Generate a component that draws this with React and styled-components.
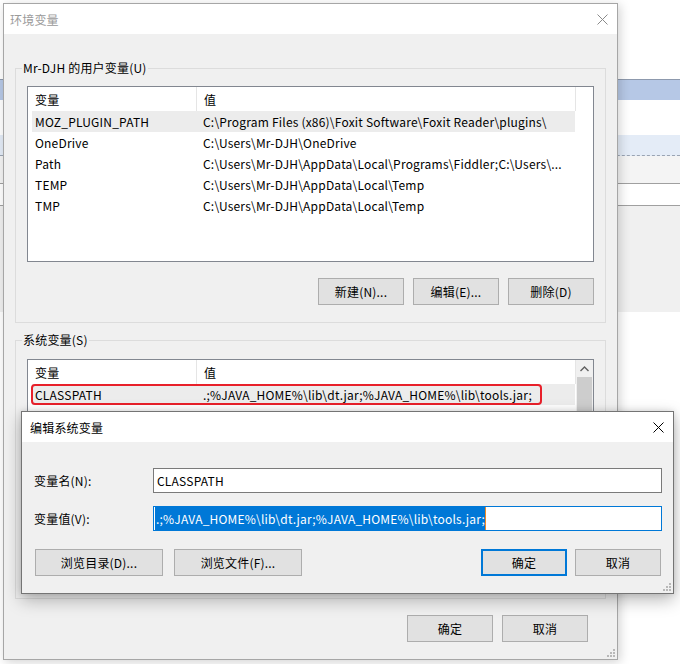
import React from "react";
import styled, { createGlobalStyle } from "styled-components";

const GlobalStyle = createGlobalStyle`
  html, body { margin: 0; padding: 0; }
  body {
    font-family: "Noto Sans CJK SC", "Noto Sans", sans-serif;
    font-size: 12px;
    letter-spacing: 0.2px;
    color: #000;
  }
`;

const Desktop = styled.div`
  position: relative;
  width: 680px;
  height: 664px;
  overflow: hidden;
  background: #fff;
`;

const BackApp = styled.div`
  display: flex;
  flex-direction: column;
  height: 100%;
`;

const Band = styled.div`
  flex: ${p => (p.$fill ? "1" : "none")};
  height: ${p => (p.$h ? p.$h + "px" : "auto")};
  background: ${p => p.$bg};
  border-bottom: ${p => p.$line || "none"};
`;

const Window = styled.div`
  position: absolute;
  left: ${p => p.$x}px;
  top: ${p => p.$y}px;
  width: ${p => p.$w}px;
  height: ${p => p.$h}px;
  box-sizing: border-box;
  display: flex;
  flex-direction: column;
  background: #f0f0f0;
  border: 1px solid ${p => (p.$active ? "#747474" : "#a6a6a6")};
  box-shadow: ${p =>
    p.$active
      ? "0 6px 16px rgba(0,0,0,0.28), 0 0 6px rgba(0,0,0,0.12)"
      : "2px 2px 10px rgba(0,0,0,0.18)"};
`;

const TitleBar = styled.div`
  height: 30px;
  flex: none;
  background: #fff;
  display: flex;
  align-items: center;
  justify-content: space-between;
  padding-left: ${p => p.$pad}px;
  color: ${p => (p.$active ? "#000" : "#9a9a9a")};
`;

const CloseBtn = styled.div`
  width: 30px;
  height: 30px;
  display: flex;
  align-items: center;
  justify-content: center;
`;

const MainBody = styled.div`
  flex: 1;
  position: relative;
  display: flex;
  flex-direction: column;
  padding: 26px 11px 0 11px;
`;

const Group = styled.fieldset`
  margin: ${p => p.$mt}px 0 0 0;
  padding: ${p => p.$pt}px 11px ${p => p.$pb}px 11px;
  border: 1px solid #dcdcdc;
  min-width: 0;
  display: flex;
  flex-direction: column;
  legend {
    margin-left: -5px;
    padding: 0 1px;
    line-height: 16px;
    color: #000;
  }
`;

const ListBox = styled.div`
  height: ${p => p.$h}px;
  box-sizing: border-box;
  border: 1px solid #828790;
  background: #fff;
  display: flex;
  overflow: hidden;
`;

const ListMain = styled.div`
  flex: 1;
  min-width: 0;
`;

const HeaderRow = styled.div`
  display: grid;
  grid-template-columns: 169px 379px;
  height: 24px;
  align-items: stretch;
  div {
    display: flex;
    align-items: center;
    padding-left: 7px;
    border-right: 1px solid #e5e5e5;
  }
`;

const Row = styled.div`
  position: relative;
  display: grid;
  grid-template-columns: 164px 379px;
  width: 543px;
  margin-left: 4px;
  height: 21px;
  background: ${p => (p.$hot ? "#ececec" : "transparent")};
  div {
    display: flex;
    align-items: center;
    white-space: nowrap;
    overflow: hidden;
  }
  div:first-of-type { padding-left: 3px; }
  div:last-of-type { padding-left: 7px; }
`;

const Mark = styled.span`
  position: absolute;
  left: -1px;
  top: 0;
  width: 511px;
  height: 21px;
  box-sizing: border-box;
  border: 2px solid #e8202a;
  border-radius: 4px;
`;

const ScrollBar = styled.div`
  width: 17px;
  flex: none;
  background: #f0f0f0;
  display: flex;
  flex-direction: column;
  align-items: center;
`;

const ScrollArrow = styled.div`
  height: 17px;
  display: flex;
  align-items: center;
  justify-content: center;
`;

const Thumb = styled.div`
  width: 15px;
  flex: 1;
  background: #cdcdcd;
`;

const ButtonRow = styled.div`
  display: flex;
  justify-content: ${p => p.$justify || "flex-end"};
  gap: ${p => p.$gap || 10}px;
  margin-top: ${p => p.$mt}px;
  padding-right: ${p => p.$pr || 0}px;
  padding-left: ${p => p.$pl || 0}px;
`;

const HiddenRow = styled.div`
  height: 27px;
  margin-top: 16px;
`;

const Button = styled.div`
  width: ${p => p.$w || 86}px;
  height: 27px;
  box-sizing: border-box;
  background: #e1e1e1;
  border: ${p => (p.$default ? "2px solid #0078d7" : "1px solid #adadad")};
  display: flex;
  align-items: center;
  justify-content: center;
`;

const ButtonGroup = styled.div`
  display: flex;
  gap: ${p => p.$gap}px;
`;

const Grip = styled.svg`
  position: absolute;
  right: 1px;
  bottom: 1px;
`;

const EditBody = styled.div`
  flex: 1;
  position: relative;
  display: flex;
  flex-direction: column;
  padding: 25px 11px 0 12px;
`;

const Field = styled.div`
  display: flex;
  align-items: center;
  margin-top: ${p => p.$mt}px;
`;

const Label = styled.div`
  width: 119px;
  flex: none;
`;

const Input = styled.div`
  flex: 1;
  height: 25px;
  box-sizing: border-box;
  background: #fff;
  border: 1px solid ${p => (p.$focus ? "#0078d7" : "#7a7a7a")};
  display: flex;
  align-items: center;
  padding: 0 1px 0 ${p => (p.$focus ? 1 : 3)}px;
  white-space: nowrap;
`;

const Selection = styled.span`
  height: 100%;
  display: inline-flex;
  align-items: center;
  padding: 0 0 0 1px;
  background: #0078d7;
  color: #fff;
`;

const Caret = styled.span`
  width: 1px;
  height: 100%;
  background: #f08a24;
`;

const Close = ({ color }) => (
  <svg width="11" height="11" viewBox="0 0 11 11">
    <path d="M0.5 0.5 L10.5 10.5 M10.5 0.5 L0.5 10.5" stroke={color} strokeWidth="1" fill="none" />
  </svg>
);

const GripIcon = () => (
  <Grip width="11" height="11" viewBox="0 0 11 11">
    {[
      [8, 2], [8, 5], [5, 5], [8, 8], [5, 8], [2, 8],
    ].map(([x, y]) => (
      <rect key={x + "-" + y} x={x} y={y} width="2" height="2" fill="#b8b8b8" />
    ))}
  </Grip>
);

const userVars = [
  ["MOZ_PLUGIN_PATH", "C:\\Program Files (x86)\\Foxit Software\\Foxit Reader\\plugins\\"],
  ["OneDrive", "C:\\Users\\Mr-DJH\\OneDrive"],
  ["Path", "C:\\Users\\Mr-DJH\\AppData\\Local\\Programs\\Fiddler;C:\\Users\\..."],
  ["TEMP", "C:\\Users\\Mr-DJH\\AppData\\Local\\Temp"],
  ["TMP", "C:\\Users\\Mr-DJH\\AppData\\Local\\Temp"],
];

const classpath = ".;%JAVA_HOME%\\lib\\dt.jar;%JAVA_HOME%\\lib\\tools.jar;";

export default function App() {
  return (
    <Desktop>
      <GlobalStyle />
      <BackApp>
        <Band $h={79} $bg="#ffffff" $line="1px solid #8d99ad" />
        <Band $h={20} $bg="#b6c8e6" $line="1px solid #ffffff" />
        <Band $h={34} $bg="#ffffff" />
        <Band $h={20} $bg="#e4ecf7" $line="1px dashed #9aa4b3" />
        <Band $h={27} $bg="#f4f4f4" $line="1px solid #a0a0a0" />
        <Band $h={21} $bg="#ffffff" $line="1px solid #a0a0a0" />
        <Band $h={106} $bg="#f0f0f0" />
        <Band $fill $bg="#ffffff" />
      </BackApp>

      <Window $x={3} $y={3} $w={615} $h={657}>
        <TitleBar $pad={6}>
          <span>环境变量</span>
          <CloseBtn>
            <Close color="#8a8a8a" />
          </CloseBtn>
        </TitleBar>
        <MainBody>
          <Group $mt={0} $pt={10} $pb={17}>
            <legend>Mr-DJH 的用户变量(U)</legend>
            <ListBox $h={176}>
              <ListMain>
                <HeaderRow>
                  <div>变量</div>
                  <div>值</div>
                </HeaderRow>
                {userVars.map(([name, value], i) => (
                  <Row key={name} $hot={i === 0}>
                    <div>{name}</div>
                    <div>{value}</div>
                  </Row>
                ))}
              </ListMain>
            </ListBox>
            <ButtonRow $mt={16} $gap={9}>
              <Button>新建(N)...</Button>
              <Button>编辑(E)...</Button>
              <Button>删除(D)</Button>
            </ButtonRow>
          </Group>

          <Group $mt={9} $pt={11} $pb={20}>
            <legend>系统变量(S)</legend>
            <ListBox $h={176}>
              <ListMain>
                <HeaderRow>
                  <div>变量</div>
                  <div>值</div>
                </HeaderRow>
                <Row $hot>
                  <Mark />
                  <div>CLASSPATH</div>
                  <div>{classpath}</div>
                </Row>
              </ListMain>
              <ScrollBar>
                <ScrollArrow>
                  <svg width="9" height="6" viewBox="0 0 9 6">
                    <path d="M0.5 5 L4.5 1 L8.5 5" stroke="#606060" strokeWidth="1.4" fill="none" />
                  </svg>
                </ScrollArrow>
                <Thumb />
              </ScrollBar>
            </ListBox>
            <HiddenRow />
          </Group>

          <ButtonRow $mt={16} $gap={9} $pr={18}>
            <Button>确定</Button>
            <Button>取消</Button>
          </ButtonRow>
          <GripIcon />
        </MainBody>
      </Window>

      <Window $x={21} $y={411} $w={653} $h={183} $active>
        <TitleBar $pad={8} $active>
          <span>编辑系统变量</span>
          <CloseBtn>
            <Close color="#000" />
          </CloseBtn>
        </TitleBar>
        <EditBody>
          <Field $mt={1}>
            <Label>变量名(N):</Label>
            <Input>CLASSPATH</Input>
          </Field>
          <Field $mt={13}>
            <Label>变量值(V):</Label>
            <Input $focus>
              <Selection>{classpath}</Selection>
              <Caret />
            </Input>
          </Field>
          <ButtonRow $mt={18} $justify="space-between" $pl={1} $pr={1}>
            <ButtonGroup $gap={11}>
              <Button $w={128}>浏览目录(D)...</Button>
              <Button $w={128}>浏览文件(F)...</Button>
            </ButtonGroup>
            <ButtonGroup $gap={8}>
              <Button $default>确定</Button>
              <Button>取消</Button>
            </ButtonGroup>
          </ButtonRow>
          <GripIcon />
        </EditBody>
      </Window>
    </Desktop>
  );
}
